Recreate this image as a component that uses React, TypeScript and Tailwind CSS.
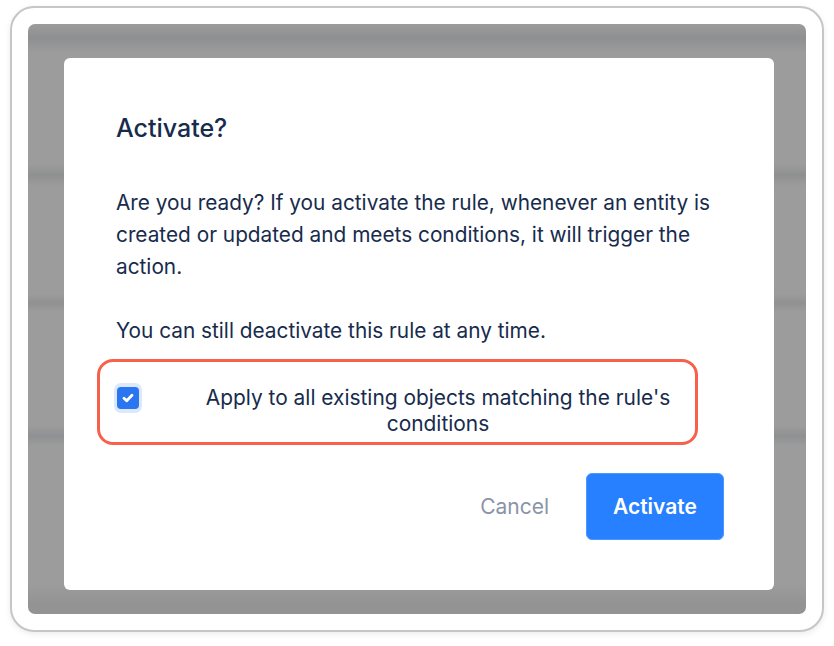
import React from "react";

export default function App() {
  return (
    <div className="w-[834px] h-[646px] bg-white pt-[6px] pl-[10px] pr-[10px] pb-[14px] [font-family:Inter,'Liberation_Sans',sans-serif]">
      <div className="w-full h-full rounded-[24px] border-2 border-[#c6c6c6] bg-white shadow-[0_2px_6px_rgba(0,0,0,0.08)] p-[16px]">
        <div className="w-full h-full rounded-[7px] pl-[36px] pr-[32px] pt-[34px] pb-[24px] bg-[linear-gradient(to_bottom,#9c9c9c_0px,#8e8f90_14px,#9c9c9c_28px,#9c9c9c_140px,#8f9091_151px,#9c9c9c_162px,#9c9c9c_270px,#919192_279px,#9c9c9c_288px,#9c9c9c_402px,#8f9091_412px,#9c9c9c_422px,#9c9c9c_560px,#939394_580px,#939394_590px)]">
          <div className="w-full h-full bg-white rounded-[6px] pl-[52px] pr-[50px] pt-[54px] text-[#172b4d] flex flex-col">
            <h2 className="text-[25px] leading-[32px] font-medium">Activate?</h2>
            <p className="mt-[43px] text-[20.8px] leading-[32px]">
              Are you ready? If you activate the rule, whenever an entity is created or updated and meets conditions, it will trigger the action.
            </p>
            <p className="mt-[32px] text-[20.8px] leading-[32px]">
              You can still deactivate this rule at any time.
            </p>
            <div className="mt-[12px] ml-[-19px] w-[601px] h-[86px] rounded-[16px] border-[3px] border-[#f8604e] flex items-start pt-[20px] pl-[14px]">
              <div className="mt-[1px] w-[28px] h-[30px] shrink-0 rounded-[7px] bg-[#dce8fc] flex items-center justify-center">
                <div className="w-[22px] h-[22px] rounded-[4px] bg-[#2a75f0] flex items-center justify-center">
                  <svg width="12" height="10" viewBox="0 0 12 10" fill="none">
                    <path d="M2 5.3 L4.7 7.8 L10 2.3" stroke="white" strokeWidth="2.8" strokeLinecap="round" strokeLinejoin="round" />
                  </svg>
                </div>
              </div>
              <div className="mt-[3px] ml-[46px] w-[500px] shrink-0 text-center text-[20.9px] leading-[26px]">
                Apply to all existing objects matching the rule's conditions
              </div>
            </div>
            <div className="mt-[28px] flex items-center justify-end">
              <button className="text-[21px] text-[#8a94a8] mr-[37px]">Cancel</button>
              <button className="w-[138px] h-[67px] rounded-[6px] bg-[#2680ff] border border-[#4d95ff] text-white text-[21px] font-semibold">
                Activate
              </button>
            </div>
          </div>
        </div>
      </div>
    </div>
  );
}
